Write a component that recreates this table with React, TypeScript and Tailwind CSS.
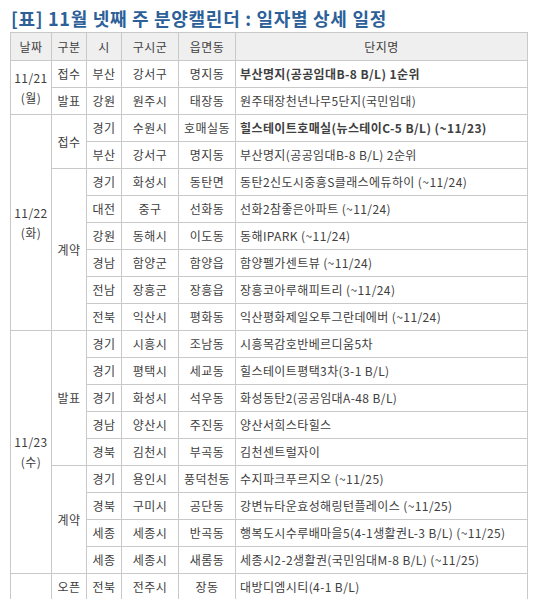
import React from "react";

type Row = {
  date?: [string, string, number];
  kind?: [string, number];
  sido: string;
  sigungu: string;
  dong: string;
  name: string;
  bold?: boolean;
};

const rows: Row[] = [
  { date: ["11/21", "(월)", 2], kind: ["접수", 1], sido: "부산", sigungu: "강서구", dong: "명지동", name: "부산명지(공공임대B-8 B/L) 1순위", bold: true },
  { kind: ["발표", 1], sido: "강원", sigungu: "원주시", dong: "태장동", name: "원주태장천년나무5단지(국민임대)" },
  { date: ["11/22", "(화)", 8], kind: ["접수", 2], sido: "경기", sigungu: "수원시", dong: "호매실동", name: "힐스테이트호매실(뉴스테이C-5 B/L) (~11/23)", bold: true },
  { sido: "부산", sigungu: "강서구", dong: "명지동", name: "부산명지(공공임대B-8 B/L) 2순위" },
  { kind: ["계약", 6], sido: "경기", sigungu: "화성시", dong: "동탄면", name: "동탄2신도시중흥S클래스에듀하이 (~11/24)" },
  { sido: "대전", sigungu: "중구", dong: "선화동", name: "선화2참좋은아파트 (~11/24)" },
  { sido: "강원", sigungu: "동해시", dong: "이도동", name: "동해IPARK (~11/24)" },
  { sido: "경남", sigungu: "함양군", dong: "함양읍", name: "함양펠가센트뷰 (~11/24)" },
  { sido: "전남", sigungu: "장흥군", dong: "장흥읍", name: "장흥코아루해피트리 (~11/24)" },
  { sido: "전북", sigungu: "익산시", dong: "평화동", name: "익산평화제일오투그란데에버 (~11/24)" },
  { date: ["11/23", "(수)", 9], kind: ["발표", 5], sido: "경기", sigungu: "시흥시", dong: "조남동", name: "시흥목감호반베르디움5차" },
  { sido: "경기", sigungu: "평택시", dong: "세교동", name: "힐스테이트평택3차(3-1 B/L)" },
  { sido: "경기", sigungu: "화성시", dong: "석우동", name: "화성동탄2(공공임대A-48 B/L)" },
  { sido: "경남", sigungu: "양산시", dong: "주진동", name: "양산서희스타힐스" },
  { sido: "경북", sigungu: "김천시", dong: "부곡동", name: "김천센트럴자이" },
  { kind: ["계약", 4], sido: "경기", sigungu: "용인시", dong: "풍덕천동", name: "수지파크푸르지오 (~11/25)" },
  { sido: "경북", sigungu: "구미시", dong: "공단동", name: "강변뉴타운효성해링턴플레이스 (~11/25)" },
  { sido: "세종", sigungu: "세종시", dong: "반곡동", name: "행복도시수루배마을5(4-1생활권L-3 B/L) (~11/25)" },
  { sido: "세종", sigungu: "세종시", dong: "새롬동", name: "세종시2-2생활권(국민임대M-8 B/L) (~11/25)" },
  { date: ["", "", 2], kind: ["오픈", 1], sido: "전북", sigungu: "전주시", dong: "장동", name: "대방디엠시티(4-1 B/L)" },
  { kind: ["", 1], sido: "", sigungu: "", dong: "", name: "" },
];

const cell = "border border-[#c9c9c9] text-center align-middle p-0";

export default function App() {
  return (
    <div
      className="w-[540px] h-[599px] overflow-hidden bg-white pl-[10px] text-[#404040]"
      style={{ fontFamily: '"Noto Sans CJK KR", "Noto Sans", sans-serif' }}
    >
      <h1 className="pt-[7px] pl-[1px] h-[32px] text-[18px] leading-[22px] font-bold text-[#2d5f99] tracking-[0.7px]">
        [표] 11월 넷째 주 분양캘린더 : 일자별 상세 일정
      </h1>
      <table className="w-[518px] border-collapse table-fixed text-[12px] leading-[14px] tracking-[0.4px]">
        <colgroup>
          <col className="w-[41px]" />
          <col className="w-[35px]" />
          <col className="w-[35px]" />
          <col className="w-[57px]" />
          <col className="w-[57px]" />
          <col />
        </colgroup>
        <thead>
          <tr className="h-[28px] bg-[#efefef]">
            <th className={`${cell} font-normal`}>날짜</th>
            <th className={`${cell} font-normal`}>구분</th>
            <th className={`${cell} font-normal`}>시</th>
            <th className={`${cell} font-normal`}>구시군</th>
            <th className={`${cell} font-normal`}>읍면동</th>
            <th className={`${cell} font-normal`}>단지명</th>
          </tr>
        </thead>
        <tbody>
          {rows.map((r, i) => (
            <tr key={i} className="h-[27px]">
              {r.date && (
                <td className={`${cell} leading-[20px]`} rowSpan={r.date[2]}>
                  <div>{r.date[0]}</div>
                  <div>{r.date[1]}</div>
                </td>
              )}
              {r.kind && (
                <td className={cell} rowSpan={r.kind[1]}>
                  {r.kind[0]}
                </td>
              )}
              <td className={cell}>{r.sido}</td>
              <td className={cell}>{r.sigungu}</td>
              <td className={cell}>{r.dong}</td>
              <td
                className={`border border-[#c9c9c9] align-middle text-left pl-[4px] whitespace-nowrap ${
                  r.bold ? "font-bold" : ""
                }`}
              >
                {r.name}
              </td>
            </tr>
          ))}
        </tbody>
      </table>
    </div>
  );
}
